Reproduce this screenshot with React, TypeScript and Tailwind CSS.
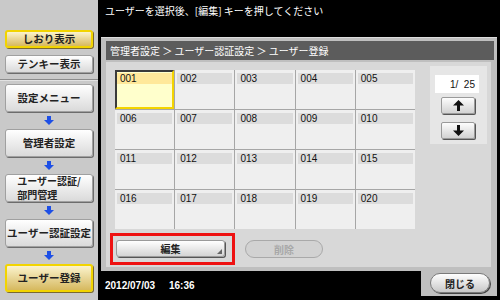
import React from "react";

const JP = { fontFamily: '"Noto Sans CJK JP", "Noto Sans", sans-serif' };
const LAT = { fontFamily: '"Liberation Sans", Arial, sans-serif' };

function BlueArrow() {
  return (
    <div className="h-[17px] flex items-center justify-center">
      <svg width="10" height="9" viewBox="0 0 10 9">
        <rect x="3" y="0" width="4" height="4" fill="#1d4fe6" />
        <polygon points="0,4 10,4 5,9" fill="#1d4fe6" />
      </svg>
    </div>
  );
}

function SideBtn({ children, yellow, h = "h-[28px]" }: { children: React.ReactNode; yellow?: boolean; h?: string }) {
  return (
    <div
      className={`${h} mx-[5px] w-[88px] rounded-[3px] flex items-center justify-center text-[10.5px] font-bold leading-[12px] text-[#222] ${
        yellow
          ? "bg-gradient-to-b from-[#fbf3cc] to-[#d6b95e] border-2 border-[#f2d400] shadow-[1px_1px_0_#7a6a30]"
          : "bg-gradient-to-b from-[#ffffff] to-[#dadada] border border-[#a0a0a0] shadow-[1px_1px_0_#6c6c6c]"
      }`}
      style={JP}
    >
      {children}
    </div>
  );
}

function Cell({ n, sel }: { n: string; sel?: boolean }) {
  return (
    <div
      className={`h-[39px] ${
        sel
          ? "bg-[#ffffcc] border-t-2 border-l-2 border-t-[#3a3a3a] border-l-[#3a3a3a] border-r-2 border-b-2 border-r-[#f4d400] border-b-[#f4d400] pt-[1px] px-[0px]"
          : "bg-[#efefef] pt-[3px] px-[2px]"
      }`}
    >
      <div
        className={`h-[11px] flex items-center pl-[3px] text-[10px] leading-none text-[#111] ${
          sel ? "bg-[#ffe89a]" : "bg-[#dcdcdc]"
        }`}
        style={LAT}
      >
        {n}
      </div>
    </div>
  );
}

function ArrowBtn({ up }: { up?: boolean }) {
  return (
    <div className="ml-[11px] w-[34px] h-[17px] rounded-[2px] bg-gradient-to-b from-[#fdfdfd] to-[#d2d2d2] border border-[#9a9a9a] shadow-[1px_1px_0_#555] flex items-center justify-center">
      <svg width="11" height="11" viewBox="0 0 11 11" style={{ transform: up ? "none" : "rotate(180deg)" }}>
        <polygon points="5.5,0 11,5.5 7,5.5 7,11 4,11 4,5.5 0,5.5" fill="#111" />
      </svg>
    </div>
  );
}

export default function App() {
  const cells = Array.from({ length: 20 }, (_, i) => String(i + 1).padStart(3, "0"));
  return (
    <div className="w-[500px] h-[300px] flex bg-black overflow-hidden">
      {/* sidebar */}
      <div className="w-[98px] h-full bg-[#c9c9c9] flex flex-col">
        <div className="pt-[30px]">
          <SideBtn yellow h="h-[18px]">しおり表示</SideBtn>
        </div>
        <div className="mt-[7px]">
          <SideBtn h="h-[18px]">テンキー表示</SideBtn>
        </div>
        <div className="mt-[6px] h-[1px] bg-[#8c8c8c]" />
        <div className="h-[1px] bg-[#e2e2e2]" />
        <div className="mt-[3px]">
          <SideBtn>設定メニュー</SideBtn>
        </div>
        <BlueArrow />
        <SideBtn>管理者設定</SideBtn>
        <BlueArrow />
        <SideBtn>
          <div className="text-left text-[10px] leading-[14px]">
            <div>ユーザー認証/</div>
            <div>部門管理</div>
          </div>
        </SideBtn>
        <BlueArrow />
        <SideBtn>ユーザー認証設定</SideBtn>
        <BlueArrow />
        <SideBtn yellow>ユーザー登録</SideBtn>
      </div>

      {/* main */}
      <div className="flex-1 flex flex-col">
        <div className="h-[37px] pl-[7px] pt-[4px] text-white text-[10px] leading-[14px]" style={JP}>
          ユーザーを選択後、[編集] キーを押してください
        </div>

        <div className="ml-[3px] mr-[3px] h-[234px] bg-[#bfbfbf] border-t border-[#dcdcdc] pl-[5px] pr-[3px] pt-[3px] flex flex-col">
          <div className="h-[19px] bg-[#5c5c5c] flex items-center pl-[4px] text-white text-[10px]" style={JP}>
            管理者設定 ＞ ユーザー認証設定 ＞ ユーザー登録
          </div>
          <div className="mt-[2px] mr-[3px] h-[205px] bg-[#d8d8d8] flex flex-col pl-[9px]">
            <div className="flex items-start pt-[4px]">
              <div className="mt-[4px] w-[300px] grid grid-cols-5 gap-[1px] bg-[#a6a6a6]">
                {cells.map((c, i) => (
                  <Cell key={c} n={c} sel={i === 0} />
                ))}
              </div>
              <div className="ml-[15px] w-[57px] h-[78px] bg-[#e6e6e6] pt-[9px]">
                <div className="ml-[5px] w-[44px] h-[18px] bg-white flex items-center justify-end pr-[4px] text-[10px] text-[#111]" style={LAT}>
                  1/&nbsp;&nbsp;25
                </div>
                <div className="mt-[4px]">
                  <ArrowBtn up />
                </div>
                <div className="mt-[8px]">
                  <ArrowBtn />
                </div>
              </div>
            </div>
            <div className="flex items-center mt-[4px] -ml-[5px]">
              <div className="w-[125px] h-[32px] border-[3px] border-[#ee1111] pl-[3px] pt-[4px]">
                <div className="relative w-[109px] h-[17px] rounded-[3px] bg-gradient-to-b from-[#ffffff] to-[#d4d4d4] border border-[#9a9a9a] shadow-[1px_1px_0_#555] flex items-center justify-center text-[10px] font-bold text-[#222]" style={JP}>
                  編集
                  <svg className="absolute right-[2px] bottom-[2px]" width="5" height="5" viewBox="0 0 5 5">
                    <polygon points="5,0 5,5 0,5" fill="#666" />
                  </svg>
                </div>
              </div>
              <div className="ml-[10px] w-[78px] h-[18px] rounded-full bg-[#d2d2d2] border border-[#a9a9a9] flex items-center justify-center text-[10px] font-bold text-[#a8a8a8]" style={JP}>
                削除
              </div>
            </div>
          </div>
        </div>

        <div className="flex-1 flex">
          <div className="flex-1 pl-[7px] pt-[9px] text-white text-[10px] font-bold leading-[12px] whitespace-pre" style={LAT}>
            {"2012/07/03     16:36"}
          </div>
          <div className="w-[76px] h-[25px] mr-[3px] bg-[#bfbfbf] pl-[9px] pt-[2px]">
            <div className="w-[60px] h-[20px] rounded-full bg-gradient-to-b from-[#ffffff] to-[#c8c8c8] border border-[#7a7a7a] shadow-[1px_1px_0_#444] flex items-center justify-center text-[10px] font-bold text-[#222]" style={JP}>
              閉じる
            </div>
          </div>
        </div>
      </div>
    </div>
  );
}
